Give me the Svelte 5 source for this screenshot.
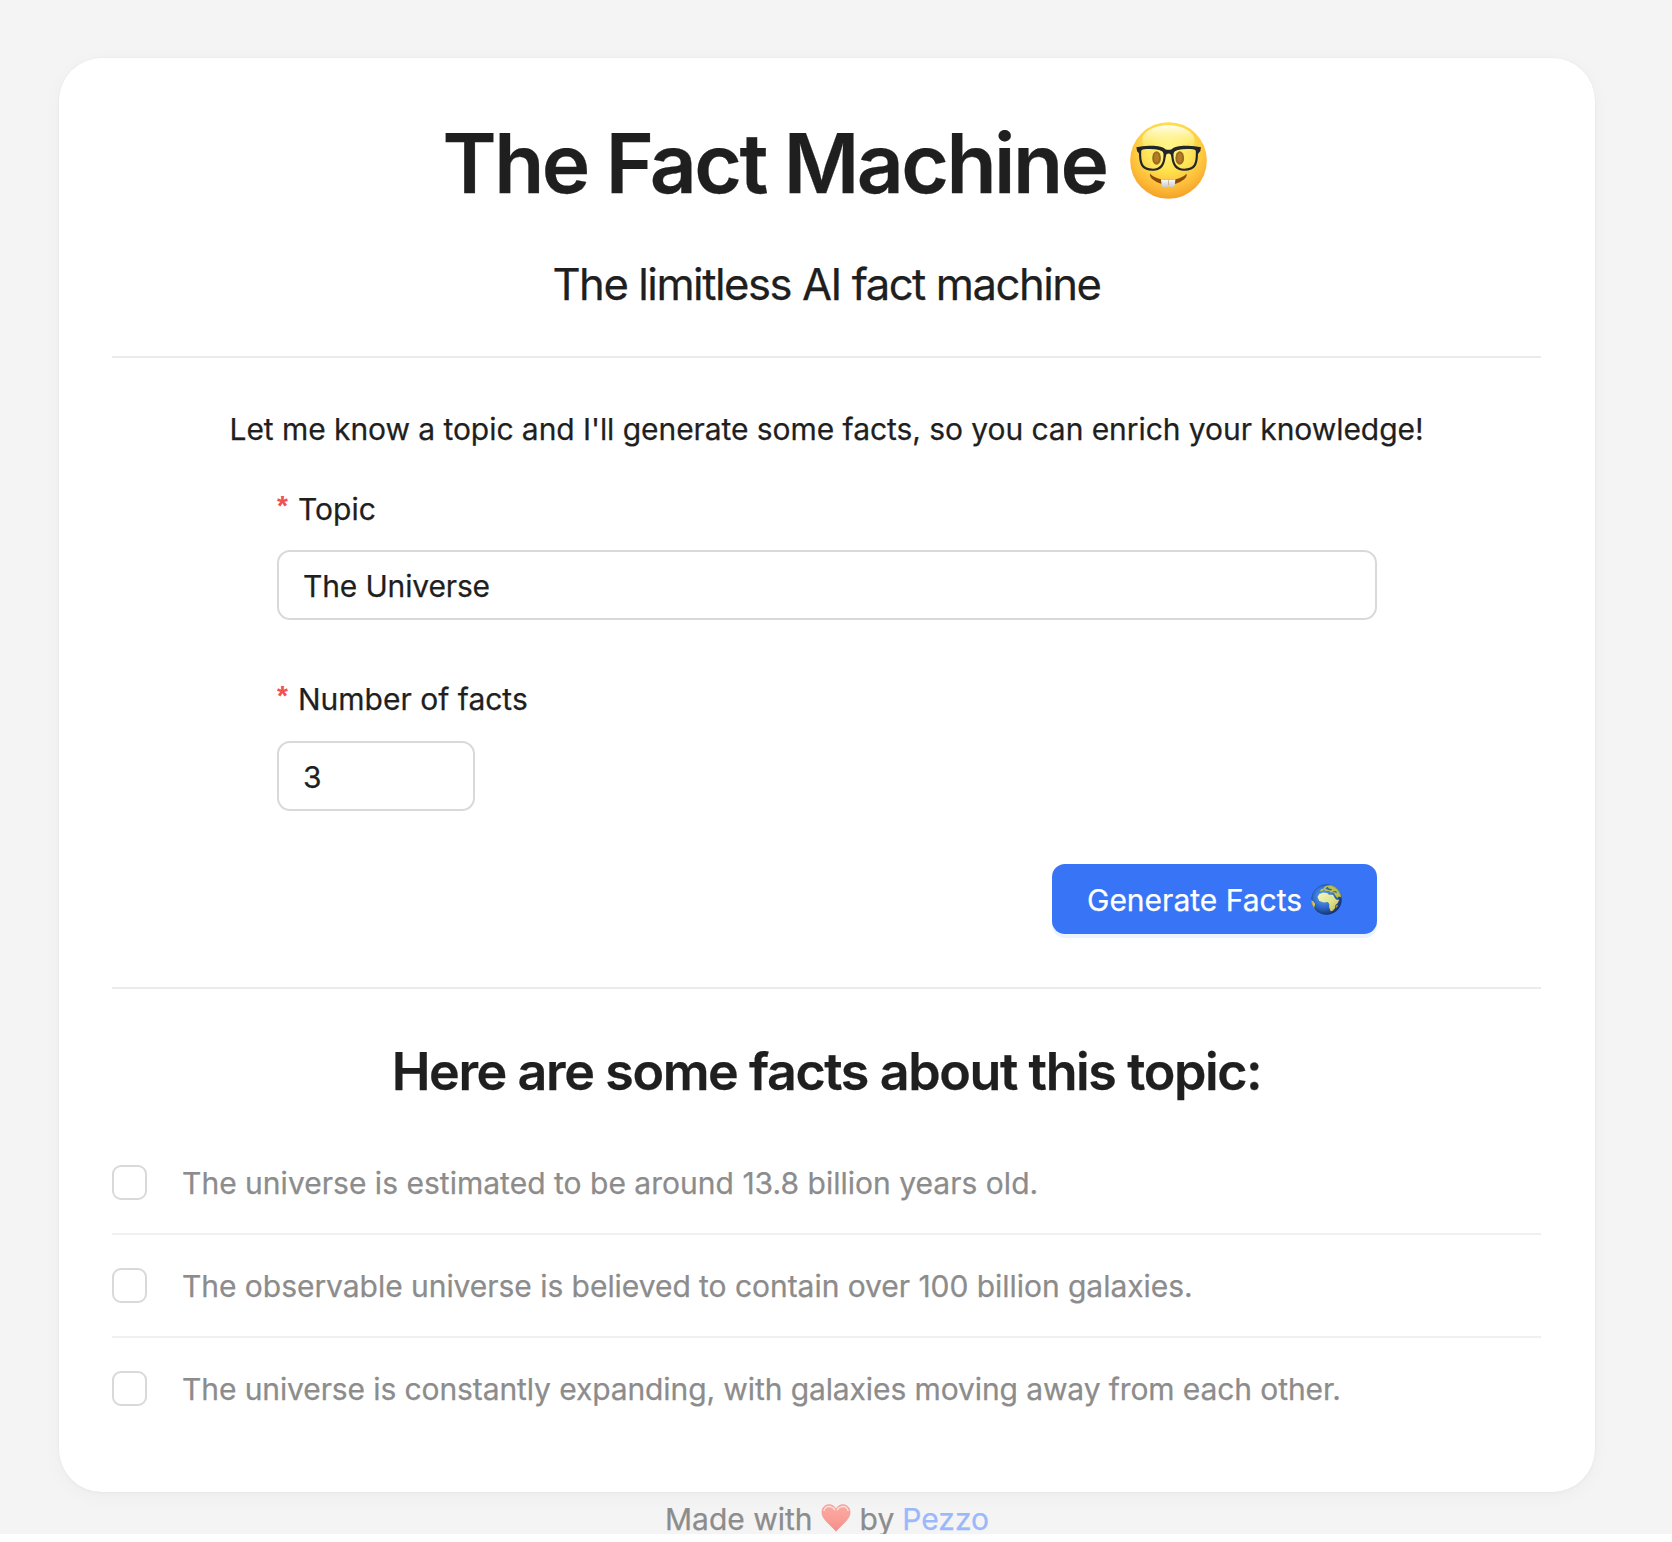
<script>
  let topic = $state('The Universe');
  let count = $state('3');
  const facts = [
    { text: 'The universe is estimated to be around 13.8 billion years old.', fit: 'loose' },
    { text: 'The observable universe is believed to contain over 100 billion galaxies.', fit: 'snug' },
    { text: 'The universe is constantly expanding, with galaxies moving away from each other.', fit: 'tight' }
  ];
</script>

<div class="page">
  <main class="card">
    <h1>
      <span>The Fact Machine</span>
      <svg class="nerd" viewBox="63 38 229 229" role="img" aria-label="Nerd face">
        <defs>
          <radialGradient id="skin" cx="50%" cy="34%" r="70%">
            <stop offset="0" stop-color="#fff58a" />
            <stop offset=".4" stop-color="#ffe44e" />
            <stop offset=".72" stop-color="#fdbe3a" />
            <stop offset="1" stop-color="#f39a22" />
          </radialGradient>
          <linearGradient id="shine" x1="0" y1="0" x2="0" y2="1">
            <stop offset="0" stop-color="#fffef0" />
            <stop offset="1" stop-color="#fff36a" stop-opacity="0" />
          </linearGradient>
          <linearGradient id="tooth" x1="0" y1="0" x2="0" y2="1">
            <stop offset="0" stop-color="#ffffff" />
            <stop offset="1" stop-color="#c9c9c9" />
          </linearGradient>
        </defs>
        <circle cx="177.500" cy="152.500" r="114" fill="url(#skin)" />
        <ellipse cx="177" cy="92" rx="78" ry="44" fill="url(#shine)" />
        <ellipse cx="142" cy="145" rx="13" ry="20" fill="#8a5208" />
        <ellipse cx="211" cy="145" rx="13" ry="20" fill="#8a5208" />
        <ellipse cx="142" cy="144" rx="7" ry="14" fill="#a5680f" />
        <ellipse cx="211" cy="144" rx="7" ry="14" fill="#a5680f" />
        <path d="M123 191 C140 216 214 216 231 191 C233 199 229 205 222 210 C196 230 158 230 132 210 C125 205 121 199 123 191Z" fill="#8a4b0a" />
        <path d="M155 208 Q165 210 176 210 V228 Q175 232 169 232 H163 Q158 232 157 226Z" fill="url(#tooth)" />
        <path d="M177 210 Q188 210 198 208 L196 226 Q195 232 190 232 H184 Q178 232 177 228Z" fill="url(#tooth)" />
        <g fill="#fff7a0" fill-opacity=".15" stroke="#22262a" stroke-width="6.500">
          <path d="M93 124 C94 117 100 115 112 115 C135 114 167 116 166 134 C166 160 156 180 131 180 C98 180 92 162 93 124Z" />
          <path d="M262 124 C261 117 255 115 243 115 C220 114 188 116 189 134 C189 160 199 180 224 180 C257 180 263 162 262 124Z" />
        </g>
        <path d="M82 113 Q105 107 134 109 Q162 111 168 119 Q178 122 187 119 Q193 111 221 109 Q250 107 274 113 L272 125 Q267 129 265 134 L258 119 Q221 113 194 124 Q190 135 188 144 L184 135 Q178 129 171 135 L168 144 Q165 132 161 124 Q134 113 97 119 L91 134 Q88 128 84 125Z" fill="#22262a" />
      </svg>
    </h1>
    <p class="tagline">The limitless AI fact machine</p>
    <hr class="rule head-rule" />

    <p class="intro">Let me know a topic and I'll generate some facts, so you can enrich your knowledge!</p>

    <form onsubmit={(e) => e.preventDefault()}>
      <label for="topic"><span class="required">*</span>Topic</label>
      <input id="topic" type="text" bind:value={topic} />

      <label class="second" for="count"><span class="required">*</span>Number of facts</label>
      <input id="count" class="short" type="text" bind:value={count} />

      <button type="submit">
        <span>Generate Facts</span>
        <svg class="globe" viewBox="18 18 90 90" role="img" aria-label="Globe">
          <defs>
            <radialGradient id="sea" cx="40%" cy="40%" r="64%">
              <stop offset="0" stop-color="#6aa6ee" />
              <stop offset=".55" stop-color="#2f6bd0" />
              <stop offset="1" stop-color="#16306d" />
            </radialGradient>
            <linearGradient id="land" x1="0" y1="0" x2="1" y2="1">
              <stop offset="0" stop-color="#f3f5c4" />
              <stop offset=".55" stop-color="#dfe58c" />
              <stop offset="1" stop-color="#c8b24a" />
            </linearGradient>
            <clipPath id="disc"><circle cx="63" cy="63" r="44" /></clipPath>
          </defs>
          <circle cx="63" cy="63" r="44" fill="url(#sea)" />
          <g clip-path="url(#disc)">
            <path d="M37 56 L42 47 L54 43 L66 45 L70 49 L82 49 L87 59 L92 64 L100 64 L95 74 L89 79 L88 88 L81 96 L75 97 L71 86 L71 76 L67 70 L55 72 L42 67Z" fill="url(#land)" />
            <path d="M44 39 L47 33 L54 31 L57 26 L65 22 L77 21 L91 27 L103 41 L107 57 L99 54 L94 59 L87 49 L83 43 L74 43 L71 38 L61 38 L55 35 L51 39Z" fill="#b9c04f" />
            <path d="M60 31 L66 26 L70 31 L79 33 L76 37 L67 35Z M80 38 L91 39 L94 45 L86 42Z" fill="#35639c" />
            <path d="M93 78 L96 80 L93 87 L90 85Z" fill="#c0a63c" />
            <path d="M17 63 L25 69 L30 76 L27 87 L30 96 L17 84Z" fill="#e8ca42" />
          </g>
          <circle cx="63" cy="63" r="43" fill="none" stroke="#16306d" stroke-opacity=".3" stroke-width="2" />
        </svg>
      </button>
    </form>

    <hr class="rule" />
    <h2>Here are some facts about this topic:</h2>

    <ul>
      {#each facts as fact}
        <li>
          <span class="box" role="checkbox" aria-checked="false" aria-label={fact.text} tabindex="0"></span>
          <span class="fact {fact.fit}">{fact.text}</span>
        </li>
      {/each}
    </ul>
  </main>

  <footer>
    <span>Made with</span>
    <svg class="heart" viewBox="0 0 90 86" role="img" aria-label="love">
      <defs>
        <linearGradient id="love" x1="0" y1="0" x2="0" y2="1">
          <stop offset="0" stop-color="#f8aaa2" />
          <stop offset=".5" stop-color="#fa9f98" />
          <stop offset="1" stop-color="#f58b88" />
        </linearGradient>
      </defs>
      <path d="M45 84 C39 76 26 65 16 54 C7 44 1 34 2 23 C3 9 13 2 24 2 C34 2 42 8 45 17 C48 8 56 2 66 2 C77 2 87 9 88 23 C89 34 83 44 74 54 C64 65 51 76 45 84Z" fill="url(#love)" stroke="#ef8f8b" stroke-width="2" />
      <path d="M8 20 Q12 7 25 7 Q36 8 41 18 M49 18 Q54 8 66 7 Q78 7 82 20" fill="none" stroke="#fde0da" stroke-width="4" stroke-linecap="round" />
    </svg>
    <span class="by">by</span>
    <a href="#pezzo">Pezzo</a>
  </footer>
</div>

<style>
  :global(body) {
    background: #fefefe;
  }

  .page {
    box-sizing: border-box;
    height: 1534px;
    padding: 58px 77px 0 59px;
    background: #f4f4f4;
    color: #1f1f1f;
    font-family: Inter, 'Liberation Sans', sans-serif;
    font-size: 30px;
    line-height: 40px;
    -webkit-text-stroke: 0.25px currentColor;
  }

  .card {
    box-sizing: border-box;
    height: 1434px;
    padding: 56px 54px 0 53px;
    background: #fff;
    border-radius: 43px;
    box-shadow:
      0 0 0 1px rgba(0, 0, 0, 0.015),
      0 2px 4px rgba(0, 0, 0, 0.02),
      0 4px 20px rgba(0, 0, 0, 0.03);
  }

  h1,
  h2,
  p,
  ul {
    margin: 0;
    padding: 0;
  }

  h1 {
    display: flex;
    justify-content: center;
    align-items: center;
    gap: 24px;
    padding-right: 3px;
    font-size: 82px;
    font-weight: 600;
    line-height: 100px;
    letter-spacing: -2.6px;
    white-space: nowrap;
  }

  .nerd {
    width: 77px;
    height: 77px;
    margin-bottom: 7px;
  }

  .tagline {
    margin-top: 41px;
    font-size: 43.6px;
    line-height: 60px;
    letter-spacing: -1.46px;
    text-align: center;
  }

  .rule {
    height: 2px;
    margin: 53px 0 0;
    border: 0;
    background: #ebebeb;
  }

  .head-rule {
    margin-top: 41px;
  }

  .intro {
    margin-top: 51px;
    text-align: center;
    white-space: nowrap;
    letter-spacing: -0.06px;
  }

  form {
    display: flex;
    flex-direction: column;
    margin: 40px 164px 0 165px;
  }

  label {
    display: flex;
    height: 40px;
  }

  label.second {
    margin: 59px 0 1px;
  }

  .required {
    width: 21px;
    color: #f0524f;
    font: bold 28px/34px 'Liberation Sans', sans-serif;
    -webkit-text-stroke: 0;
  }

  input {
    box-sizing: border-box;
    width: 100%;
    height: 70px;
    margin: 21px 0 0;
    padding: 2px 24px 0;
    border: 2px solid #d9d9d9;
    border-radius: 13px;
    outline: none;
    background: #fff;
    color: inherit;
    font: inherit;
    letter-spacing: -0.15px;
  }

  .short {
    width: 198px;
  }

  button {
    display: flex;
    align-items: center;
    align-self: flex-end;
    gap: 9px;
    box-sizing: border-box;
    width: 325px;
    height: 70px;
    margin: 53px 0 0;
    padding: 2px 0 0 35px;
    border: 0;
    border-radius: 13px;
    background: #3875f6;
    box-shadow: 0 4px 0 #ebf3fe;
    color: #fff;
    font: inherit;
    white-space: nowrap;
  }

  .globe {
    width: 31px;
    height: 31px;
    margin-bottom: 2px;
  }

  h2 {
    margin: 53px 0 30px;
    font-size: 52px;
    font-weight: 600;
    line-height: 60px;
    letter-spacing: -1.4px;
    text-align: center;
    white-space: nowrap;
  }

  li {
    display: flex;
    align-items: center;
    gap: 35px;
    height: 101px;
    color: #8c8c8c;
    white-space: nowrap;
  }

  li:not(:last-child) {
    border-bottom: 2px solid #f0f0f0;
  }

  .box {
    box-sizing: border-box;
    width: 35px;
    height: 35px;
    border: 2px solid #d9d9d9;
    border-radius: 9px;
  }

  .fact {
    padding-top: 1px;
  }

  .loose {
    letter-spacing: 0.02px;
  }

  .snug {
    letter-spacing: -0.04px;
  }

  .tight {
    letter-spacing: -0.1px;
  }

  footer {
    display: flex;
    justify-content: center;
    margin-top: 7px;
    color: #8c8c8c;
    white-space: nowrap;
  }

  .heart {
    width: 30px;
    height: 28px;
    margin: 5px 9px 0 8px;
  }

  .by {
    margin-right: 8px;
  }

  a {
    color: #9ab8fa;
    text-decoration: none;
  }
</style>
